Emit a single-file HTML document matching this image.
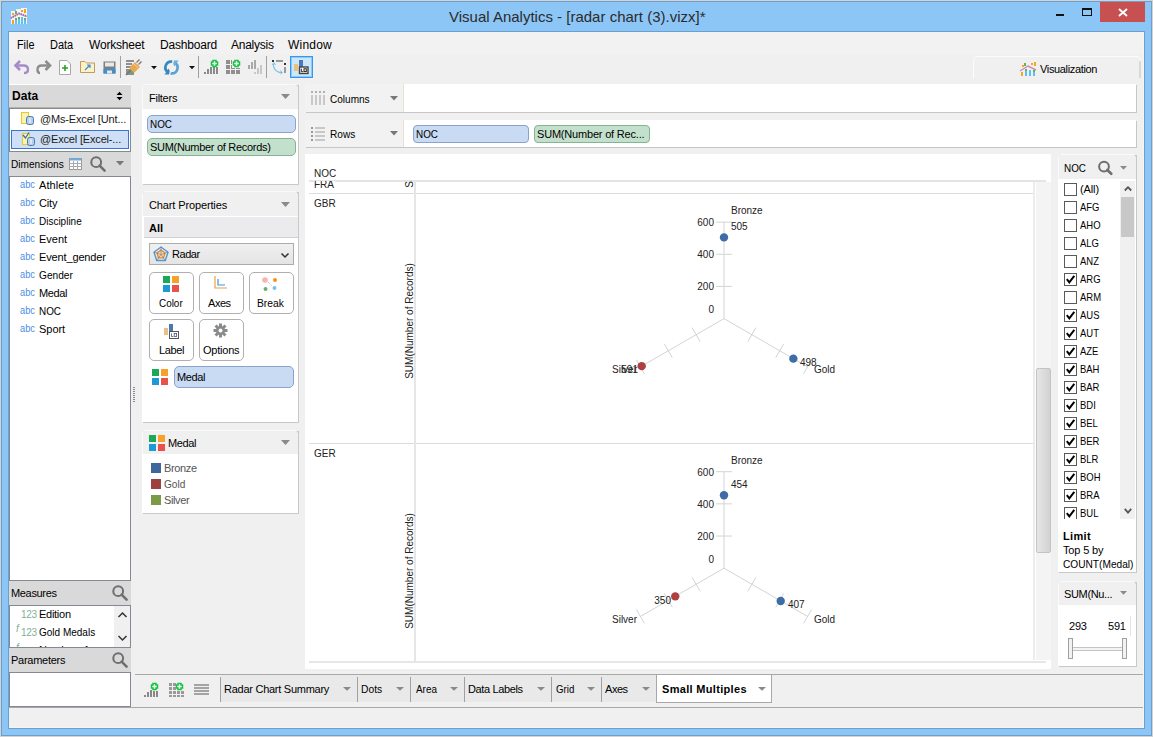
<!DOCTYPE html>
<html><head><meta charset="utf-8">
<style>
*{box-sizing:border-box;margin:0;padding:0}
body{width:1153px;height:737px;position:relative;overflow:hidden;background:#d5d2cf;font-family:"Liberation Sans",sans-serif;font-size:11px;color:#1a1a1a}
.a{position:absolute}
.t{position:absolute;white-space:nowrap;line-height:1;letter-spacing:-0.35px}
.m{position:absolute;white-space:nowrap;line-height:1;font-size:12px;letter-spacing:-0.4px}
.c{position:absolute;white-space:nowrap;line-height:1;font-size:11px;color:#222}
svg{position:absolute;overflow:visible}
</style></head><body>
<div class="a" style="left:1px;top:1px;width:1151px;height:735px;background:#6a9fd0"></div>
<div class="a" style="left:2px;top:2px;width:1149px;height:733px;background:#8cc6f7"></div>
<div class="a" style="left:8px;top:31px;width:1137px;height:698px;background:#6a9fd0"></div>
<div class="a" style="left:9px;top:32px;width:1135px;height:696px;background:#f8f4f0"></div>
<div class="a" style="left:9px;top:32px;width:1134px;height:695px;background:#f0f0f0"></div>
<div class="a" style="left:9px;top:32px;width:1134px;height:22px;background:#f2f2f2"></div>
<!-- title -->
<div class="t" style="left:449px;top:9px;font-size:15px;letter-spacing:0;color:#2b2b2b">Visual Analytics - [radar chart (3).vizx]*</div>
<div class="a" style="left:1100px;top:2px;width:45px;height:20px;background:#c75050"></div>
<svg style="left:1118px;top:8px" width="10" height="9"><path d="M1 1L9 8M9 1L1 8" stroke="#fff" stroke-width="1.9"></path></svg>
<div class="a" style="left:1082px;top:8px;width:10px;height:8px;border:1px solid #111;border-top-width:2px"></div>
<div class="a" style="left:1056px;top:14px;width:8px;height:2px;background:#111"></div>
<!-- app icon -->
<svg style="left:11px;top:8px" width="16" height="16">
<path d="M0 3H5V1H10V0H16V16H0Z" fill="#fdfaf2" opacity=".9"></path>
<rect x="1" y="5" width="2" height="2" fill="#f5a31a"></rect><rect x="4" y="3" width="2" height="3" fill="#6aaa5a"></rect>
<rect x="10" y="2" width="2" height="2" fill="#f5a31a"></rect><rect x="13" y="1" width="2" height="4" fill="#f5a31a"></rect>
<path d="M0 10L8 5.5L16 8.5" stroke="#f4a8a0" stroke-width="1.8" fill="none"></path><path d="M0 10L8 5.5L16 8.5" stroke="#8a6ad0" stroke-width="1.8" fill="none" stroke-dasharray="1.2 1"></path>
<rect x="1" y="12" width="2" height="4" fill="#f5a31a"></rect>
<rect x="4" y="12" width="2" height="4" fill="#5ec0f5"></rect><rect x="4" y="10" width="2" height="2" fill="#6aaa5a"></rect>
<rect x="7" y="11" width="2" height="5" fill="#5ec0f5"></rect><rect x="7" y="9" width="2" height="2" fill="#6aaa5a"></rect>
<rect x="10" y="9" width="2" height="7" fill="#5ec0f5"></rect>
<rect x="13" y="12" width="2" height="4" fill="#5ec0f5"></rect><rect x="13" y="10" width="2" height="2" fill="#6aaa5a"></rect>
</svg>

<div class="m" style="color: rgb(0, 0, 0); left: 17px; top: 39px; letter-spacing: 0px; transform: scaleX(0.9); transform-origin: 0px 0px;">File</div>
<div class="m" style="color: rgb(0, 0, 0); left: 50px; top: 39px; letter-spacing: 0px; transform: scaleX(0.915); transform-origin: 0px 0px;">Data</div>
<div class="m" style="color: rgb(0, 0, 0); left: 89px; top: 39px; letter-spacing: -0.2px;">Worksheet</div>
<div class="m" style="color: rgb(0, 0, 0); left: 160px; top: 39px; letter-spacing: -0.19px;">Dashboard</div>
<div class="m" style="color: rgb(0, 0, 0); left: 231px; top: 39px; letter-spacing: -0.25px;">Analysis</div>
<div class="m" style="color: rgb(0, 0, 0); left: 288px; top: 39px; letter-spacing: 0.2px;">Window</div>

<!-- undo -->
<svg style="left:14px;top:60px" width="16" height="14"><path d="M6 1L1.5 5.5L6 10" stroke="#a68bc9" stroke-width="2.6" fill="none" stroke-linejoin="miter"></path><path d="M2 5.5H9.5Q14 5.5 14 9.5Q14 13 10 13" stroke="#a68bc9" stroke-width="2.4" fill="none"></path></svg>
<!-- redo -->
<svg style="left:36px;top:60px" width="16" height="14"><path d="M9.5 1L14 5.5L9.5 10" stroke="#8d8d8d" stroke-width="2.6" fill="none"></path><path d="M14 5.5H6Q1.5 5.5 1.5 9.5Q1.5 13 4 13" stroke="#8d8d8d" stroke-width="2.4" fill="none"></path></svg>
<!-- new sheet -->
<svg style="left:59px;top:60px" width="12" height="15"><path d="M0.5 0.5H8L11.5 4V14.5H0.5Z" fill="#fff" stroke="#a8a8a8"></path><path d="M3 8H9M6 5V11" stroke="#2aa02a" stroke-width="1.6"></path></svg>
<!-- open -->
<svg style="left:80px;top:61px" width="15" height="12"><path d="M0.5 0.5H5L6.5 2H14.5V11.5H0.5Z" fill="#fcf2c8" stroke="#c09a60"></path><path d="M5 9L10 4M7 4H10V7" stroke="#3a8fd0" stroke-width="1.2" fill="none"></path></svg>
<!-- save -->
<svg style="left:103px;top:61px" width="13" height="13"><rect x="0.5" y="0.5" width="12" height="12" fill="#7f7f7f"></rect><rect x="2" y="1.5" width="9" height="4" fill="#e8e8e8"></rect><rect x="0.5" y="8" width="12" height="4.5" fill="#3d8fd0"></rect><rect x="4" y="9.5" width="5" height="3" fill="#e8e8e8"></rect></svg>
<div class="a" style="left:120px;top:56px;width:1px;height:22px;background:#a0a0a0"></div>
<!-- data source -->
<svg style="left:125px;top:60px" width="17" height="16"><g fill="#8f8f8f"><rect x="1" y="0" width="8" height="2"></rect><rect x="1" y="3" width="6" height="2"></rect><rect x="1" y="6" width="6" height="2"></rect><rect x="1" y="9" width="8" height="6"></rect></g><path d="M4.5 7.5L10 2L15 7L9.5 12.5Q6 12 4.5 7.5Z" fill="#eba850"></path><path d="M8 3L13 8" stroke="#f6d7a8" stroke-width=".8"></path><path d="M11.5 2.5L14.5 -0.5M13.5 4.5L16.5 1.5" stroke="#777" stroke-width="1.3"></path><path d="M1 15L6 10" stroke="#777" stroke-width="1.6"></path><rect x="6" y="11" width="1.6" height="1.6" fill="#22dd22"></rect></svg>
<svg style="left:151px;top:66px" width="6" height="4"><path d="M0 0H6L3 3.2Z" fill="#111"></path></svg>
<!-- refresh -->
<svg style="left:164px;top:60px" width="15" height="15"><path d="M8 1.6A5.8 5.8 0 0 0 4.2 12.3" stroke="#3a88c2" stroke-width="2.7" fill="none"></path><path d="M0.5 14.5H7.5L4.5 8.5Z" fill="#3a88c2"></path><path d="M7 13.4A5.8 5.8 0 0 0 10.8 2.7" stroke="#5aa2d4" stroke-width="2.7" fill="none"></path><path d="M14.5 0.5H7.5L10.5 6.5Z" fill="#6ab0dc"></path><path d="M5.5 15L9.5 0" stroke="#f0f0f0" stroke-width="1.3"></path></svg>
<svg style="left:189px;top:66px" width="6" height="4"><path d="M0 0H6L3 3.2Z" fill="#111"></path></svg>
<div class="a" style="left:198px;top:56px;width:1px;height:22px;background:#a0a0a0"></div>
<!-- bars + -->
<svg style="left:204px;top:60px" width="15" height="14"><g fill="#8a8a8a"><rect x="0" y="12" width="2" height="2"></rect><rect x="3" y="9" width="2" height="5"></rect><rect x="6" y="7" width="2" height="7"></rect><rect x="9" y="7" width="2" height="7"></rect><rect x="12" y="7" width="2" height="7"></rect></g><path d="M9 0.5H12V2H13.5V5H12V6.5H9V5H7.5V2H9Z" fill="#e8ffe8" stroke="#18c048" stroke-width="1.5"></path></svg>
<!-- grid + -->
<svg style="left:226px;top:60px" width="15" height="14"><g fill="#8f8f8f"><rect x="0" y="0" width="4" height="4"></rect><rect x="5" y="0" width="4" height="4"></rect><rect x="0" y="5" width="4" height="4"></rect><rect x="5" y="5" width="4" height="4"></rect><rect x="10" y="5" width="4" height="4"></rect><rect x="0" y="10" width="4" height="4"></rect><rect x="5" y="10" width="4" height="4"></rect><rect x="10" y="10" width="4" height="4"></rect></g><rect x="6" y="0" width="9" height="8" fill="#f0f0f0"></rect><path d="M9 0.5H12V2H13.5V5H12V6.5H9V5H7.5V2H9Z" fill="#e8ffe8" stroke="#18c048" stroke-width="1.5"></path></svg>
<!-- bars gray -->
<svg style="left:248px;top:60px" width="15" height="14"><g fill="#a8a8a8"><rect x="0" y="5" width="2" height="4"></rect><rect x="3" y="2" width="2" height="7"></rect><rect x="6" y="0" width="2" height="9"></rect></g><g fill="#c8c8c8"><rect x="6" y="12" width="2" height="2"></rect><rect x="9" y="8" width="2" height="6"></rect><rect x="12" y="5" width="2" height="9"></rect></g></svg>
<div class="a" style="left:266px;top:56px;width:1px;height:22px;background:#a0a0a0"></div>
<!-- dashed rect -->
<svg style="left:272px;top:60px" width="15" height="14"><rect x="0" y="0" width="2" height="2" fill="#333"></rect><rect x="4" y="0" width="7" height="2" fill="#999"></rect><rect x="12" y="3" width="2" height="2" fill="#333"></rect><rect x="12" y="7" width="2" height="6" fill="#999"></rect><path d="M1.5 4Q1 9 5.5 11.5Q8 13 10 12.5" stroke="#7cc0ea" stroke-width="1.1" fill="none"></path><path d="M0 5L1.8 2.5L3.5 5" stroke="#7cc0ea" fill="none"></path><path d="M8 10.5L10.5 12.5L8.5 14" stroke="#7cc0ea" fill="none"></path></svg>
<!-- selected button -->
<div class="a" style="left:290px;top:56px;width:23px;height:22px;background:#cce6fc;border:1px solid #3399f0;box-shadow:inset 0 0 0 1px #8ec8f8"></div>
<svg style="left:294px;top:60px" width="15" height="15"><rect x="0" y="4" width="4" height="7" fill="#e8c080"></rect><rect x="5" y="0" width="4" height="7" fill="#4a7ab8"></rect><rect x="5.5" y="7" width="8.5" height="6.5" fill="#fff" stroke="#444" stroke-width="1.4"></rect><path d="M7.3 8.7V11.7H9.2" stroke="#222" stroke-width="1" fill="none"></path><rect x="10" y="8.8" width="2.3" height="2.8" fill="none" stroke="#222" stroke-width="1"></rect></svg>
<!-- Visualization tab -->
<div class="a" style="left:973px;top:56px;width:168px;height:22px;background:#f0f0f0;border:1px solid #fcfcfc;border-bottom:none;border-radius:5px 5px 0 0"></div>
<div class="a" style="left:1139px;top:61px;width:2px;height:17px;background:#d8d8d8"></div>
<svg style="left:1020px;top:62px" width="17" height="14">
<rect x="2" y="3" width="2" height="2" fill="#f5a623"></rect><rect x="4" y="1" width="2" height="3" fill="#6ab04c"></rect>
<rect x="11" y="1" width="2" height="2" fill="#f5a623"></rect><rect x="14" y="0" width="2" height="4" fill="#f5a623"></rect>
<path d="M0 9L8 4L16 8" stroke="#c98ab8" stroke-width="1.4" fill="none"></path>
<rect x="1" y="10" width="2" height="4" fill="#f5a623"></rect><rect x="5" y="9" width="2" height="5" fill="#5bc0f8"></rect>
<rect x="9" y="8" width="2" height="6" fill="#5bc0f8"></rect><rect x="13" y="10" width="2" height="4" fill="#5bc0f8"></rect>
<rect x="5" y="7" width="2" height="2" fill="#6ab04c"></rect><rect x="13" y="8" width="2" height="2" fill="#6ab04c"></rect>
</svg>
<div class="t" style="left: 1040px; top: 64px; color: rgb(0, 0, 0); letter-spacing: -0.34px;">Visualization</div>

<!-- left panel -->
<div class="a" style="left:9px;top:85px;width:122px;height:622px;background:#d9d9d9"></div>
<div class="a" style="left:9px;top:85px;width:122px;height:22px;background:#d9d9d9"></div>
<div class="t" style="left: 12px; top: 90px; font-weight: bold; font-size: 12px; letter-spacing: 0.05px; color: rgb(0, 0, 0);">Data</div>
<div class="a" style="left:9px;top:84px;width:122px;height:1px;background:#fff"></div><svg style="left:116px;top:91px" width="7" height="10"><path d="M0.5 4L3.5 0.8L6.5 4Z M0.5 6L3.5 9.2L6.5 6Z" fill="#000"></path></svg>
<div class="a" style="left:9px;top:107px;width:122px;height:1px;background:#bab3a0"></div><div class="a" style="left:9px;top:108px;width:122px;height:44px;background:#fff;border:1px solid #848a94"></div>
<svg style="left:21px;top:112px" width="14" height="13"><rect x="0.5" y="0.5" width="7" height="11" fill="#f9f3b0" stroke="#e6c830"></rect><rect x="5.5" y="4.5" width="7" height="8" rx="2" fill="#b8cde8" stroke="#4a7ab8"></rect><path d="M9 6V11" stroke="#fff"></path></svg>
<div class="t" style="left: 40px; top: 114px; letter-spacing: -0.16px;">@Ms-Excel [Unt...</div>
<div class="a" style="left:11px;top:130px;width:118px;height:19px;background:#cfe0f6;border:1px solid #3a74d0"></div>
<svg style="left:22px;top:132px" width="14" height="14"><rect x="0.5" y="1.5" width="7" height="11" fill="#f9f3b0" stroke="#e6c830"></rect><path d="M1 3L3.5 6L7 0.5" stroke="#3a6ab8" stroke-width="1.3" fill="none"></path><rect x="5.5" y="5.5" width="7" height="8" rx="2" fill="#b8cde8" stroke="#4a7ab8"></rect><path d="M9 7V12" stroke="#fff"></path></svg>
<div class="t" style="left: 40px; top: 134px; letter-spacing: -0.17px;">@Excel [Excel-...</div>
<!-- dimensions -->
<div class="t" style="left: 11px; top: 159px; color: rgb(0, 0, 0); letter-spacing: 0px; transform: scaleX(0.918); transform-origin: 0px 0px;">Dimensions</div>
<svg style="left:69px;top:158px" width="13" height="12"><rect x="0.5" y="0.5" width="12" height="11" fill="#fff" stroke="#999"></rect><rect x="0.5" y="0.5" width="12" height="2" fill="#6aaee8"></rect><path d="M0 5.5H13M0 8.5H13M4.5 3V12M8.5 3V12" stroke="#aaa" stroke-width="1"></path></svg>
<svg style="left:90px;top:156px" width="17" height="16"><circle cx="6.2" cy="6.2" r="4.9" stroke="#6e6e6e" stroke-width="2" fill="none"></circle><path d="M9.6 9.6L14.6 14.6" stroke="#6e6e6e" stroke-width="2.6" stroke-linecap="round"></path></svg>
<svg style="left:116px;top:161px" width="8" height="5"><path d="M0 0H8L4 4.5Z" fill="#777"></path></svg>
<div class="a" style="left:9px;top:176px;width:122px;height:405px;background:#fff;border:1px solid #848a94"></div>

<div class="t" style="left: 20px; top: 179px; color: rgb(77, 141, 230); letter-spacing: 0px; transform: scaleX(0.839); transform-origin: 0px 0px;">abc</div><div class="t" style="left: 39px; top: 180px; color: rgb(0, 0, 0); letter-spacing: 0.1px;">Athlete</div>
<div class="t" style="left: 20px; top: 197px; color: rgb(77, 141, 230); letter-spacing: 0px; transform: scaleX(0.839); transform-origin: 0px 0px;">abc</div><div class="t" style="left: 39px; top: 198px; color: rgb(0, 0, 0); letter-spacing: -0.15px;">City</div>
<div class="t" style="left: 20px; top: 215px; color: rgb(77, 141, 230); letter-spacing: 0px; transform: scaleX(0.839); transform-origin: 0px 0px;">abc</div><div class="t" style="left: 39px; top: 216px; color: rgb(0, 0, 0); letter-spacing: 0px; transform: scaleX(0.907); transform-origin: 0px 0px;">Discipline</div>
<div class="t" style="left: 20px; top: 233px; color: rgb(77, 141, 230); letter-spacing: 0px; transform: scaleX(0.839); transform-origin: 0px 0px;">abc</div><div class="t" style="left: 39px; top: 234px; color: rgb(0, 0, 0); letter-spacing: -0.02px;">Event</div>
<div class="t" style="left: 20px; top: 251px; color: rgb(77, 141, 230); letter-spacing: 0px; transform: scaleX(0.839); transform-origin: 0px 0px;">abc</div><div class="t" style="left: 39px; top: 252px; color: rgb(0, 0, 0); letter-spacing: -0.14px;">Event_gender</div>
<div class="t" style="left: 20px; top: 269px; color: rgb(77, 141, 230); letter-spacing: 0px; transform: scaleX(0.839); transform-origin: 0px 0px;">abc</div><div class="t" style="left: 39px; top: 270px; color: rgb(0, 0, 0); letter-spacing: 0px; transform: scaleX(0.924); transform-origin: 0px 0px;">Gender</div>
<div class="t" style="left: 20px; top: 287px; color: rgb(77, 141, 230); letter-spacing: 0px; transform: scaleX(0.839); transform-origin: 0px 0px;">abc</div><div class="t" style="left: 39px; top: 288px; color: rgb(0, 0, 0); letter-spacing: -0.38px;">Medal</div>
<div class="t" style="left: 20px; top: 305px; color: rgb(77, 141, 230); letter-spacing: 0px; transform: scaleX(0.839); transform-origin: 0px 0px;">abc</div><div class="t" style="left: 39px; top: 306px; color: rgb(0, 0, 0); letter-spacing: 0px; transform: scaleX(0.898); transform-origin: 0px 0px;">NOC</div>
<div class="t" style="left: 20px; top: 323px; color: rgb(77, 141, 230); letter-spacing: 0px; transform: scaleX(0.839); transform-origin: 0px 0px;">abc</div><div class="t" style="left: 39px; top: 324px; color: rgb(0, 0, 0); letter-spacing: -0.03px;">Sport</div>
<!-- measures -->
<div class="t" style="left: 11px; top: 588px; color: rgb(0, 0, 0); letter-spacing: -0.34px;">Measures</div>
<svg style="left:112px;top:585px" width="17" height="16"><circle cx="6.2" cy="6.2" r="4.9" stroke="#6e6e6e" stroke-width="2" fill="none"></circle><path d="M9.6 9.6L14.6 14.6" stroke="#6e6e6e" stroke-width="2.6" stroke-linecap="round"></path></svg>
<div class="a" style="left:9px;top:605px;width:122px;height:43px;background:#fff;border:1px solid #848a94;overflow:hidden">
<div class="a" style="left:104px;top:0;width:16px;height:41px;background:#f0f0f0"></div>
<svg style="left:108px;top:6px" width="9" height="6"><path d="M0.5 5L4.5 1L8.5 5" stroke="#333" stroke-width="1.5" fill="none"></path></svg>
<svg style="left:108px;top:29px" width="9" height="6"><path d="M0.5 1L4.5 5L8.5 1" stroke="#333" stroke-width="1.5" fill="none"></path></svg>
<div class="t" style="left:11px;top:4px;color:#7fb09a;font-size:10px">123</div><div class="t" style="left: 29px; top: 3px; color: rgb(0, 0, 0); letter-spacing: -0.27px;">Edition</div>
<div class="t" style="left:6px;top:18px;color:#7fb09a;font-size:10px;font-style:italic">f</div>
<div class="t" style="left:11px;top:22px;color:#7fb09a;font-size:10px">123</div><div class="t" style="left: 29px; top: 21px; color: rgb(0, 0, 0); letter-spacing: 0px; transform: scaleX(0.909); transform-origin: 0px 0px;">Gold Medals</div>
<div class="t" style="left:6px;top:37px;color:#7fb09a;font-size:10px;font-style:italic">f</div>
<div class="t" style="left:29px;top:39px;color:#000">Number of</div>
</div>
<div class="t" style="left: 11px; top: 655px; color: rgb(0, 0, 0); letter-spacing: -0.26px;">Parameters</div>
<svg style="left:112px;top:652px" width="17" height="16"><circle cx="6.2" cy="6.2" r="4.9" stroke="#6e6e6e" stroke-width="2" fill="none"></circle><path d="M9.6 9.6L14.6 14.6" stroke="#6e6e6e" stroke-width="2.6" stroke-linecap="round"></path></svg>
<div class="a" style="left:9px;top:672px;width:122px;height:35px;background:#fff;border:1px solid #848a94"></div>

<!-- splitter handle -->
<svg style="left:133px;top:387px" width="2" height="16"><path d="M0 0.5H2M0 2.5H2M0 4.5H2M0 6.5H2M0 8.5H2M0 10.5H2M0 12.5H2M0 14.5H2" stroke="#8a8a8a"></path></svg>
<!-- Filters card -->
<div class="a" style="left:143px;top:85px;width:156px;height:100px;background:#c9c9c9;border-radius:4px 0 0 0"></div>
<div class="a" style="left:142px;top:84px;width:156px;height:100px;background:#fff;border-radius:5px 5px 0 0;overflow:hidden">
 <div class="a" style="left:0;top:0;width:156px;height:25px;background:#f0f0f0;border-top:1px solid #fafafa;border-left:1px solid #fafafa"></div>
</div>
<div class="t" style="left: 149px; top: 93px; color: rgb(0, 0, 0); letter-spacing: -0.26px;">Filters</div>
<svg style="left:281px;top:94px" width="9" height="6"><path d="M0 0H9L4.5 5Z" fill="#8a8a8a"></path></svg>
<div class="a" style="left:147px;top:115px;width:149px;height:18px;background:#c9daf3;border:1px solid #8aa3cc;border-radius:5px"></div>
<div class="t" style="left: 150px; top: 119px; color: rgb(0, 0, 0); letter-spacing: 0px; transform: scaleX(0.898); transform-origin: 0px 0px;">NOC</div>
<div class="a" style="left:147px;top:138px;width:149px;height:18px;background:#c3e0cc;border:1px solid #86b394;border-radius:5px"></div>
<div class="t" style="left: 150px; top: 142px; color: rgb(0, 0, 0); letter-spacing: -0.3px;">SUM(Number of Records)</div>
<!-- Chart properties card -->
<div class="a" style="left:143px;top:192px;width:156px;height:231px;background:#c9c9c9"></div>
<div class="a" style="left:142px;top:191px;width:156px;height:231px;background:#fff;border-radius:5px 5px 0 0;overflow:hidden">
 <div class="a" style="left:0;top:0;width:156px;height:25px;background:#f0f0f0;border-top:1px solid #fafafa;border-left:1px solid #fafafa"></div>
 <div class="a" style="left:2px;top:25px;width:154px;height:22px;background:#ebebed;border-top:1px solid #fff;border-bottom:1px solid #d0d0d0"></div>
</div>
<div class="t" style="left: 149px; top: 200px; color: rgb(0, 0, 0); letter-spacing: -0.13px;">Chart Properties</div>
<svg style="left:281px;top:202px" width="9" height="6"><path d="M0 0H9L4.5 5Z" fill="#8a8a8a"></path></svg>
<div class="t" style="left: 149px; top: 223px; font-weight: bold; color: rgb(0, 0, 0); letter-spacing: 0px;">All</div>
<div class="a" style="left:149px;top:243px;width:145px;height:22px;background:linear-gradient(#f0f0f0,#e4e4e4);border:1px solid #acacac"></div>
<svg style="left:153px;top:246px" width="16" height="16"><path d="M8 1L15 6.2L12.3 14.5H3.7L1 6.2Z" fill="none" stroke="#4a9ad8" stroke-width="1.4"></path><path d="M8 4L12 7L10.5 11.8H5.5L4 7Z" fill="#f8d8b0" stroke="#e8862a" stroke-width="1.3"></path><path d="M8 1V8.5M1 6.2L8 8.5L15 6.2M3.7 14.5L8 8.5L12.3 14.5" stroke="#777" stroke-width=".6" fill="none"></path></svg>
<div class="t" style="left: 172px; top: 249px; color: rgb(0, 0, 0); letter-spacing: -0.45px;">Radar</div>
<svg style="left:281px;top:253px" width="8" height="5"><path d="M0.5 0.5L4 4L7.5 0.5" stroke="#333" stroke-width="1.5" fill="none"></path></svg>
<!-- buttons -->
<div class="a" style="left:149px;top:272px;width:45px;height:42px;background:#fff;border:1px solid #b0b0b0;border-radius:5px"></div>
<div class="a" style="left:199px;top:272px;width:45px;height:42px;background:#fff;border:1px solid #b0b0b0;border-radius:5px"></div>
<div class="a" style="left:249px;top:272px;width:45px;height:42px;background:#fff;border:1px solid #b0b0b0;border-radius:5px"></div>
<div class="a" style="left:149px;top:319px;width:45px;height:42px;background:#fff;border:1px solid #b0b0b0;border-radius:5px"></div>
<div class="a" style="left:199px;top:319px;width:45px;height:42px;background:#fff;border:1px solid #b0b0b0;border-radius:5px"></div>
<svg style="left:163px;top:276px" width="16" height="16"><rect x="0" y="0" width="7" height="7" fill="#1aaa55"></rect><rect x="9" y="0" width="7" height="7" fill="#f7a12a"></rect><rect x="0" y="9" width="7" height="7" fill="#1b9ad6"></rect><rect x="9" y="9" width="7" height="7" fill="#e8524a"></rect></svg>
<div class="t" style="left: 159px; top: 298px; color: rgb(0, 0, 0); letter-spacing: 0px; transform: scaleX(0.901); transform-origin: 0px 0px;">Color</div>
<svg style="left:214px;top:276px" width="14" height="13"><path d="M1 0V12H13" stroke="#f0a040" stroke-width="1.2" fill="none"></path><path d="M4 3V9H11" stroke="#3d9ad8" stroke-width="1.2" fill="none"></path></svg>
<div class="t" style="left: 208px; top: 298px; color: rgb(0, 0, 0); letter-spacing: -0.45px;">Axes</div>
<svg style="left:262px;top:277px" width="16" height="15"><circle cx="3" cy="3" r="2.8" fill="#f5b5b0"></circle><circle cx="13" cy="3" r="2" fill="#f7901e"></circle><circle cx="3.5" cy="12" r="2" fill="#6ab06a"></circle><circle cx="12.5" cy="11" r="2" fill="#7cc0f0"></circle><path d="M6 5L10 9" stroke="#999" stroke-width=".8" stroke-dasharray="1 1"></path></svg>
<div class="t" style="left: 257px; top: 298px; color: rgb(0, 0, 0); letter-spacing: 0px; transform: scaleX(0.934); transform-origin: 0px 0px;">Break</div>
<svg style="left:164px;top:323px" width="15" height="16"><rect x="0" y="5" width="4" height="7" fill="#e8c08a"></rect><rect x="5" y="1" width="4" height="8" fill="#4a78b0"></rect><rect x="5.5" y="8.5" width="9" height="7" fill="#fff" stroke="#555" stroke-width="1"></rect><path d="M7.5 10.5V13.5H9.3" stroke="#3a5a8a" stroke-width=".8" fill="none"></path><rect x="10.2" y="10.5" width="2.4" height="3" fill="none" stroke="#3a5a8a" stroke-width=".8"></rect></svg>
<div class="t" style="left: 159px; top: 345px; color: rgb(0, 0, 0); letter-spacing: -0.37px;">Label</div>
<svg style="left:213px;top:323px" width="15" height="15"><g fill="#8a8a8a"><circle cx="7.5" cy="7.5" r="4.5"></circle><rect x="6" y="0.5" width="3" height="14"></rect><rect x="0.5" y="6" width="14" height="3"></rect><rect x="6" y="0.5" width="3" height="14" transform="rotate(45 7.5 7.5)"></rect><rect x="6" y="0.5" width="3" height="14" transform="rotate(-45 7.5 7.5)"></rect></g><circle cx="7.5" cy="7.5" r="2" fill="#fff"></circle></svg>
<div class="t" style="left: 203px; top: 345px; color: rgb(0, 0, 0); letter-spacing: -0.23px;">Options</div>
<svg style="left:152px;top:369px" width="16" height="16"><rect x="0" y="0" width="7" height="7" fill="#1aaa55"></rect><rect x="9" y="0" width="7" height="7" fill="#f7a12a"></rect><rect x="0" y="9" width="7" height="7" fill="#1b9ad6"></rect><rect x="9" y="9" width="7" height="7" fill="#e8524a"></rect></svg>
<div class="a" style="left:174px;top:366px;width:120px;height:22px;background:#c9daf3;border:1px solid #8aa3cc;border-radius:5px"></div>
<div class="t" style="left: 177px; top: 372px; color: rgb(0, 0, 0); letter-spacing: -0.38px;">Medal</div>
<!-- Medal legend card -->
<div class="a" style="left:143px;top:431px;width:156px;height:83px;background:#c9c9c9"></div>
<div class="a" style="left:142px;top:430px;width:156px;height:83px;background:#fff;border-radius:5px 5px 0 0;overflow:hidden">
 <div class="a" style="left:0;top:0;width:156px;height:24px;background:#f0f0f0;border-top:1px solid #fafafa;border-left:1px solid #fafafa"></div>
</div>
<svg style="left:149px;top:435px" width="16" height="16"><rect x="0" y="0" width="7" height="7" fill="#1aaa55"></rect><rect x="9" y="0" width="7" height="7" fill="#f7a12a"></rect><rect x="0" y="9" width="7" height="7" fill="#1b9ad6"></rect><rect x="9" y="9" width="7" height="7" fill="#e8524a"></rect></svg>
<div class="t" style="left: 168px; top: 438px; color: rgb(0, 0, 0); letter-spacing: -0.38px;">Medal</div>
<svg style="left:281px;top:440px" width="9" height="6"><path d="M0 0H9L4.5 5Z" fill="#8a8a8a"></path></svg>
<div class="a" style="left:151px;top:463px;width:10px;height:10px;background:#3f679c"></div>
<div class="t" style="left: 164px; top: 463px; color: rgb(85, 85, 85); letter-spacing: -0.35px;">Bronze</div>
<div class="a" style="left:151px;top:479px;width:10px;height:10px;background:#9c4040"></div>
<div class="t" style="left: 164px; top: 479px; color: rgb(85, 85, 85); letter-spacing: 0px; transform: scaleX(0.917); transform-origin: 0px 0px;">Gold</div>
<div class="a" style="left:151px;top:495px;width:10px;height:10px;background:#7a9a48"></div>
<div class="t" style="left: 164px; top: 495px; color: rgb(85, 85, 85); letter-spacing: -0.39px;">Silver</div>

<!-- Columns shelf -->
<div class="a" style="left:306px;top:85px;width:831px;height:28px;background:#c6c6c6;border-radius:4px 0 0 0"></div>
<div class="a" style="left:305px;top:84px;width:831px;height:28px;background:#fff;border-radius:5px 0 0 0;overflow:hidden">
 <div class="a" style="left:0;top:0;width:99px;height:28px;background:#f2f2f2;border-right:1px solid #e8e2d4"></div>
</div>
<svg style="left:311px;top:91px" width="14" height="14"><g fill="#c8c8c8"><rect x="0" y="0" width="2" height="2" fill="#b0b0b0"></rect><rect x="4" y="0" width="2" height="2" fill="#b0b0b0"></rect><rect x="8" y="0" width="2" height="2" fill="#b0b0b0"></rect><rect x="12" y="0" width="2" height="2" fill="#b0b0b0"></rect><rect x="0" y="4" width="2" height="10"></rect><rect x="4" y="4" width="2" height="10"></rect><rect x="8" y="4" width="2" height="10"></rect><rect x="12" y="4" width="2" height="10"></rect></g></svg>
<div class="t" style="left: 330px; top: 94px; color: rgb(0, 0, 0); letter-spacing: 0px; transform: scaleX(0.913); transform-origin: 0px 0px;">Columns</div>
<svg style="left:390px;top:96px" width="8" height="5"><path d="M0 0H8L4 4.5Z" fill="#777"></path></svg>
<!-- Rows shelf -->
<div class="a" style="left:306px;top:121px;width:831px;height:27px;background:#c6c6c6;border-radius:4px 0 0 0"></div>
<div class="a" style="left:305px;top:120px;width:831px;height:27px;background:#fff;border-radius:5px 0 0 0;overflow:hidden">
 <div class="a" style="left:0;top:0;width:99px;height:27px;background:#f2f2f2;border-right:1px solid #e8e2d4"></div>
</div>
<svg style="left:311px;top:127px" width="14" height="14"><g fill="#c8c8c8"><rect x="0" y="0" width="2" height="2" fill="#999"></rect><rect x="0" y="4" width="2" height="2" fill="#999"></rect><rect x="0" y="8" width="2" height="2" fill="#999"></rect><rect x="0" y="12" width="2" height="2" fill="#999"></rect><rect x="4" y="0" width="10" height="2"></rect><rect x="4" y="4" width="10" height="2"></rect><rect x="4" y="8" width="10" height="2"></rect><rect x="4" y="12" width="10" height="2"></rect></g></svg>
<div class="t" style="left: 330px; top: 129px; color: rgb(0, 0, 0); letter-spacing: 0px; transform: scaleX(0.918); transform-origin: 0px 0px;">Rows</div>
<svg style="left:390px;top:131px" width="8" height="5"><path d="M0 0H8L4 4.5Z" fill="#777"></path></svg>
<div class="a" style="left:413px;top:125px;width:116px;height:18px;background:#c9daf3;border:1px solid #8aa3cc;border-radius:4px"></div>
<div class="t" style="left: 416px; top: 129px; color: rgb(0, 0, 0); letter-spacing: 0px; transform: scaleX(0.898); transform-origin: 0px 0px;">NOC</div>
<div class="a" style="left:534px;top:125px;width:116px;height:18px;background:#c3e0cc;border:1px solid #86b394;border-radius:4px"></div>
<div class="t" style="left: 537px; top: 129px; color: rgb(0, 0, 0); letter-spacing: -0.19px;">SUM(Number of Rec...</div>

<!-- chart area -->
<div class="a" style="left:305px;top:154px;width:746px;height:515px;background:#fff"></div>
<div class="a" style="left:1036px;top:182px;width:15px;height:478px;background:#f4f4f4"></div>
<div class="a" style="left:1036px;top:368px;width:15px;height:185px;background:linear-gradient(90deg,#e6e6e6,#d2d2d2);border:1px solid #c4c4c4;border-radius:2px"></div>
<div class="a" style="left:1033px;top:182px;width:2px;height:478px;background:#ececec"></div>
<svg style="left:0;top:0" width="1153" height="737">
<line x1="309" y1="181" x2="1046" y2="181" stroke="#e4e4e4" stroke-width="2"></line>
<line x1="309" y1="193.5" x2="1033" y2="193.5" stroke="#dcdcdc" stroke-width="1"></line>
<line x1="309" y1="443.5" x2="1033" y2="443.5" stroke="#dcdcdc" stroke-width="1"></line>
<line x1="309" y1="662" x2="1046" y2="662" stroke="#e6e6e6" stroke-width="2"></line>
<line x1="415" y1="181" x2="415" y2="662" stroke="#e6e6e6" stroke-width="2"></line>
</svg>
<div class="c" style="left:314px;top:169px;font-size:10px;">NOC</div>
<div class="c" style="left:314px;top:199px;font-size:10px;">GBR</div>
<div class="c" style="left:314px;top:449px;font-size:10px;">GER</div>
<div class="a" style="left:305px;top:181px;width:90px;height:12px;overflow:hidden"><div class="c" style="left:9px;top:-1px;font-size:10px;background:#fff;padding-right:1px">FRA</div></div>
<div class="a" style="left:395px;top:181px;width:19px;height:12px;overflow:hidden"><div class="c" style="left:-45px;top:-57px;width:120px;height:12px;line-height:12px;text-align:center;font-size:10px;transform:rotate(-90deg)">SUM(Number of Records)</div></div>

<svg style="left:0;top:0" width="1153" height="737">
<line x1="724" y1="318.6" x2="724" y2="222.10000000000002" stroke="#d4d4d4"></line>
<line x1="716" y1="286.43333333333334" x2="732" y2="286.43333333333334" stroke="#d4d4d4"></line>
<line x1="716" y1="254.2666666666667" x2="732" y2="254.2666666666667" stroke="#d4d4d4"></line>
<line x1="716" y1="222.10000000000002" x2="732" y2="222.10000000000002" stroke="#d4d4d4"></line>
<line x1="724" y1="318.6" x2="807.57" y2="366.85" stroke="#d4d4d4"></line>
<line x1="755.86" y1="327.76" x2="747.86" y2="341.61" stroke="#d4d4d4"></line>
<line x1="783.71" y1="343.84" x2="775.71" y2="357.69" stroke="#d4d4d4"></line>
<line x1="811.57" y1="359.92" x2="803.57" y2="373.78" stroke="#d4d4d4"></line>
<line x1="724" y1="318.6" x2="640.43" y2="366.85" stroke="#d4d4d4"></line>
<line x1="700.14" y1="341.61" x2="692.14" y2="327.76" stroke="#d4d4d4"></line>
<line x1="672.29" y1="357.69" x2="664.29" y2="343.84" stroke="#d4d4d4"></line>
<line x1="644.43" y1="373.78" x2="636.43" y2="359.92" stroke="#d4d4d4"></line>
<circle cx="724" cy="237.38" r="4.2" fill="#3e6ca7"></circle>
<circle cx="793.36" cy="358.65" r="4.2" fill="#3e6ca7"></circle>
<circle cx="641.68" cy="366.13" r="4.2" fill="#b04040"></circle>
<line x1="724" y1="568.2" x2="724" y2="471.70000000000005" stroke="#d4d4d4"></line>
<line x1="716" y1="536.0333333333334" x2="732" y2="536.0333333333334" stroke="#d4d4d4"></line>
<line x1="716" y1="503.86666666666673" x2="732" y2="503.86666666666673" stroke="#d4d4d4"></line>
<line x1="716" y1="471.70000000000005" x2="732" y2="471.70000000000005" stroke="#d4d4d4"></line>
<line x1="724" y1="568.2" x2="807.57" y2="616.45" stroke="#d4d4d4"></line>
<line x1="755.86" y1="577.36" x2="747.86" y2="591.21" stroke="#d4d4d4"></line>
<line x1="783.71" y1="593.44" x2="775.71" y2="607.29" stroke="#d4d4d4"></line>
<line x1="811.57" y1="609.52" x2="803.57" y2="623.38" stroke="#d4d4d4"></line>
<line x1="724" y1="568.2" x2="640.43" y2="616.45" stroke="#d4d4d4"></line>
<line x1="700.14" y1="591.21" x2="692.14" y2="577.36" stroke="#d4d4d4"></line>
<line x1="672.29" y1="607.29" x2="664.29" y2="593.44" stroke="#d4d4d4"></line>
<line x1="644.43" y1="623.38" x2="636.43" y2="609.52" stroke="#d4d4d4"></line>
<circle cx="724" cy="495.18" r="4.2" fill="#3e6ca7"></circle>
<circle cx="780.69" cy="600.93" r="4.2" fill="#3e6ca7"></circle>
<circle cx="675.25" cy="596.35" r="4.2" fill="#b04040"></circle>
</svg>
<div class="c" style="left:731px;top:206px;font-size:10px">Bronze</div>
<div class="c" style="left:654px;width:60px;text-align:right;top:218.0px;font-size:10px">600</div>
<div class="c" style="left:654px;width:60px;text-align:right;top:250.16666666666669px;font-size:10px">400</div>
<div class="c" style="left:654px;width:60px;text-align:right;top:282.3333333333333px;font-size:10px">200</div>
<div class="c" style="left:654px;width:60px;text-align:right;top:305px;font-size:10px">0</div>
<div class="c" style="left:814px;top:365px;font-size:10px">Gold</div>
<div class="c" style="left:577px;width:60px;text-align:right;top:365px;font-size:10px">Silver</div>
<div class="c" style="left:731px;top:222.27916666666667px;font-size:10px">505</div>
<div class="c" style="left:800px;top:358px;font-size:10px">498</div>
<div class="c" style="left:578px;width:60px;text-align:right;top:365px;font-size:10px">591</div>
<div class="c" style="left:731px;top:456px;font-size:10px">Bronze</div>
<div class="c" style="left:654px;width:60px;text-align:right;top:468.0px;font-size:10px">600</div>
<div class="c" style="left:654px;width:60px;text-align:right;top:500.1666666666667px;font-size:10px">400</div>
<div class="c" style="left:654px;width:60px;text-align:right;top:532.3333333333334px;font-size:10px">200</div>
<div class="c" style="left:654px;width:60px;text-align:right;top:555px;font-size:10px">0</div>
<div class="c" style="left:814px;top:615px;font-size:10px">Gold</div>
<div class="c" style="left:577px;width:60px;text-align:right;top:615px;font-size:10px">Silver</div>
<div class="c" style="left:731px;top:480.4816666666667px;font-size:10px">454</div>
<div class="c" style="left:788px;top:600px;font-size:10px">407</div>
<div class="c" style="left:611px;width:60px;text-align:right;top:596px;font-size:10px">350</div>
<div class="c" style="left:350px;top:314.5px;width:120px;height:12px;line-height:12px;text-align:center;font-size:10px;transform:rotate(-90deg)">SUM(Number of Records)</div>
<div class="c" style="left:350px;top:564.5px;width:120px;height:12px;line-height:12px;text-align:center;font-size:10px;transform:rotate(-90deg)">SUM(Number of Records)</div>

<!-- NOC filter card -->
<div class="a" style="left:1059px;top:155px;width:78px;height:418px;background:#c8c8c8"></div>
<div class="a" style="left:1058px;top:154px;width:78px;height:418px;background:#fff;border-radius:5px 5px 0 0;overflow:hidden">
 <div class="a" style="left:0;top:0;width:78px;height:25px;background:#f0f0f0;border-top:1px solid #fafafa;border-left:1px solid #fafafa"></div>
</div>
<div class="t" style="left: 1064px; top: 163px; color: rgb(0, 0, 0); letter-spacing: 0px; transform: scaleX(0.898); transform-origin: 0px 0px;">NOC</div>
<svg style="left:1097px;top:160px" width="17" height="16"><circle cx="7" cy="6.6" r="4.9" stroke="#6e6e6e" stroke-width="2" fill="none"></circle><path d="M10.3 10L14.3 13.8" stroke="#6e6e6e" stroke-width="2.6" stroke-linecap="round"></path></svg>
<svg style="left:1120px;top:166px" width="7" height="4"><path d="M0 0H7L3.5 3.8Z" fill="#8a8a8a"></path></svg>
<div class="a" style="left:1120px;top:181px;width:15px;height:338px;background:#f0f0f0"></div>
<div class="a" style="left:1121px;top:197px;width:13px;height:40px;background:#c8c8c8"></div>
<svg style="left:1124px;top:186px" width="8" height="5"><path d="M0.8 4.5L4 1.2L7.2 4.5" stroke="#555" stroke-width="1.8" fill="none"></path></svg>
<svg style="left:1124px;top:508px" width="8" height="6"><path d="M0.8 0.8L4 4.5L7.2 0.8" stroke="#555" stroke-width="1.8" fill="none"></path></svg>
<div class="a" style="left:1064px;top:183px;width:13px;height:13px;background:#fff;border:1px solid #5a5a5a"></div>
<div class="t" style="left: 1080px; top: 184px; color: rgb(0, 0, 0); letter-spacing: -0.12px;">(All)</div>
<div class="a" style="left:1064px;top:201px;width:13px;height:13px;background:#fff;border:1px solid #5a5a5a"></div>
<div class="t" style="left:1080px;top:202px;color:#000;letter-spacing:0;transform:scaleX(.86);transform-origin:0 0">AFG</div>
<div class="a" style="left:1064px;top:219px;width:13px;height:13px;background:#fff;border:1px solid #5a5a5a"></div>
<div class="t" style="left:1080px;top:220px;color:#000;letter-spacing:0;transform:scaleX(.86);transform-origin:0 0">AHO</div>
<div class="a" style="left:1064px;top:237px;width:13px;height:13px;background:#fff;border:1px solid #5a5a5a"></div>
<div class="t" style="left:1080px;top:238px;color:#000;letter-spacing:0;transform:scaleX(.86);transform-origin:0 0">ALG</div>
<div class="a" style="left:1064px;top:255px;width:13px;height:13px;background:#fff;border:1px solid #5a5a5a"></div>
<div class="t" style="left:1080px;top:256px;color:#000;letter-spacing:0;transform:scaleX(.86);transform-origin:0 0">ANZ</div>
<div class="a" style="left:1064px;top:273px;width:13px;height:13px;background:#fff;border:1px solid #5a5a5a"></div>
<svg style="left:1065px;top:274px" width="11" height="11"><path d="M1.8 5.2L4.3 8.3L9.3 1.8" stroke="#000" stroke-width="2" fill="none"></path></svg>
<div class="t" style="left:1080px;top:274px;color:#000;letter-spacing:0;transform:scaleX(.86);transform-origin:0 0">ARG</div>
<div class="a" style="left:1064px;top:291px;width:13px;height:13px;background:#fff;border:1px solid #5a5a5a"></div>
<div class="t" style="left:1080px;top:292px;color:#000;letter-spacing:0;transform:scaleX(.86);transform-origin:0 0">ARM</div>
<div class="a" style="left:1064px;top:309px;width:13px;height:13px;background:#fff;border:1px solid #5a5a5a"></div>
<svg style="left:1065px;top:310px" width="11" height="11"><path d="M1.8 5.2L4.3 8.3L9.3 1.8" stroke="#000" stroke-width="2" fill="none"></path></svg>
<div class="t" style="left:1080px;top:310px;color:#000;letter-spacing:0;transform:scaleX(.86);transform-origin:0 0">AUS</div>
<div class="a" style="left:1064px;top:327px;width:13px;height:13px;background:#fff;border:1px solid #5a5a5a"></div>
<svg style="left:1065px;top:328px" width="11" height="11"><path d="M1.8 5.2L4.3 8.3L9.3 1.8" stroke="#000" stroke-width="2" fill="none"></path></svg>
<div class="t" style="left:1080px;top:328px;color:#000;letter-spacing:0;transform:scaleX(.86);transform-origin:0 0">AUT</div>
<div class="a" style="left:1064px;top:345px;width:13px;height:13px;background:#fff;border:1px solid #5a5a5a"></div>
<svg style="left:1065px;top:346px" width="11" height="11"><path d="M1.8 5.2L4.3 8.3L9.3 1.8" stroke="#000" stroke-width="2" fill="none"></path></svg>
<div class="t" style="left:1080px;top:346px;color:#000;letter-spacing:0;transform:scaleX(.86);transform-origin:0 0">AZE</div>
<div class="a" style="left:1064px;top:363px;width:13px;height:13px;background:#fff;border:1px solid #5a5a5a"></div>
<svg style="left:1065px;top:364px" width="11" height="11"><path d="M1.8 5.2L4.3 8.3L9.3 1.8" stroke="#000" stroke-width="2" fill="none"></path></svg>
<div class="t" style="left:1080px;top:364px;color:#000;letter-spacing:0;transform:scaleX(.86);transform-origin:0 0">BAH</div>
<div class="a" style="left:1064px;top:381px;width:13px;height:13px;background:#fff;border:1px solid #5a5a5a"></div>
<svg style="left:1065px;top:382px" width="11" height="11"><path d="M1.8 5.2L4.3 8.3L9.3 1.8" stroke="#000" stroke-width="2" fill="none"></path></svg>
<div class="t" style="left:1080px;top:382px;color:#000;letter-spacing:0;transform:scaleX(.86);transform-origin:0 0">BAR</div>
<div class="a" style="left:1064px;top:399px;width:13px;height:13px;background:#fff;border:1px solid #5a5a5a"></div>
<svg style="left:1065px;top:400px" width="11" height="11"><path d="M1.8 5.2L4.3 8.3L9.3 1.8" stroke="#000" stroke-width="2" fill="none"></path></svg>
<div class="t" style="left:1080px;top:400px;color:#000;letter-spacing:0;transform:scaleX(.86);transform-origin:0 0">BDI</div>
<div class="a" style="left:1064px;top:417px;width:13px;height:13px;background:#fff;border:1px solid #5a5a5a"></div>
<svg style="left:1065px;top:418px" width="11" height="11"><path d="M1.8 5.2L4.3 8.3L9.3 1.8" stroke="#000" stroke-width="2" fill="none"></path></svg>
<div class="t" style="left:1080px;top:418px;color:#000;letter-spacing:0;transform:scaleX(.86);transform-origin:0 0">BEL</div>
<div class="a" style="left:1064px;top:435px;width:13px;height:13px;background:#fff;border:1px solid #5a5a5a"></div>
<svg style="left:1065px;top:436px" width="11" height="11"><path d="M1.8 5.2L4.3 8.3L9.3 1.8" stroke="#000" stroke-width="2" fill="none"></path></svg>
<div class="t" style="left:1080px;top:436px;color:#000;letter-spacing:0;transform:scaleX(.86);transform-origin:0 0">BER</div>
<div class="a" style="left:1064px;top:453px;width:13px;height:13px;background:#fff;border:1px solid #5a5a5a"></div>
<svg style="left:1065px;top:454px" width="11" height="11"><path d="M1.8 5.2L4.3 8.3L9.3 1.8" stroke="#000" stroke-width="2" fill="none"></path></svg>
<div class="t" style="left:1080px;top:454px;color:#000;letter-spacing:0;transform:scaleX(.86);transform-origin:0 0">BLR</div>
<div class="a" style="left:1064px;top:471px;width:13px;height:13px;background:#fff;border:1px solid #5a5a5a"></div>
<svg style="left:1065px;top:472px" width="11" height="11"><path d="M1.8 5.2L4.3 8.3L9.3 1.8" stroke="#000" stroke-width="2" fill="none"></path></svg>
<div class="t" style="left:1080px;top:472px;color:#000;letter-spacing:0;transform:scaleX(.86);transform-origin:0 0">BOH</div>
<div class="a" style="left:1064px;top:489px;width:13px;height:13px;background:#fff;border:1px solid #5a5a5a"></div>
<svg style="left:1065px;top:490px" width="11" height="11"><path d="M1.8 5.2L4.3 8.3L9.3 1.8" stroke="#000" stroke-width="2" fill="none"></path></svg>
<div class="t" style="left:1080px;top:490px;color:#000;letter-spacing:0;transform:scaleX(.86);transform-origin:0 0">BRA</div>
<div class="a" style="left:1064px;top:507px;width:13px;height:13px;background:#fff;border:1px solid #5a5a5a"></div>
<svg style="left:1065px;top:508px" width="11" height="11"><path d="M1.8 5.2L4.3 8.3L9.3 1.8" stroke="#000" stroke-width="2" fill="none"></path></svg>
<div class="t" style="left:1080px;top:508px;color:#000;letter-spacing:0;transform:scaleX(.86);transform-origin:0 0">BUL</div>
<div class="a" style="left:1060px;top:519px;width:60px;height:3px;background:#fff"></div>
<div class="t" style="left: 1063px; top: 531px; font-weight: bold; color: rgb(0, 0, 0); letter-spacing: 0.32px;">Limit</div>
<div class="t" style="left: 1063px; top: 545px; color: rgb(0, 0, 0); letter-spacing: -0.15px;">Top 5 by</div>
<div class="t" style="left: 1063px; top: 559px; color: rgb(0, 0, 0); letter-spacing: 0px; transform: scaleX(0.922); transform-origin: 0px 0px;">COUNT(Medal)</div>
<!-- SUM card -->
<div class="a" style="left:1059px;top:582px;width:78px;height:85px;background:#c8c8c8"></div>
<div class="a" style="left:1058px;top:581px;width:78px;height:85px;background:#fff;border-radius:5px 5px 0 0;overflow:hidden">
 <div class="a" style="left:0;top:0;width:78px;height:24px;background:#f0f0f0;border-top:1px solid #fafafa;border-left:1px solid #fafafa"></div>
</div>
<div class="t" style="left: 1064px; top: 589px; color: rgb(0, 0, 0); letter-spacing: -0.35px;">SUM(Nu...</div>
<svg style="left:1120px;top:591px" width="7" height="4"><path d="M0 0H7L3.5 3.8Z" fill="#8a8a8a"></path></svg>
<div class="t" style="left: 1069px; top: 621px; color: rgb(0, 0, 0); letter-spacing: -0.22px;">293</div>
<div class="t" style="left: 1108px; top: 621px; color: rgb(0, 0, 0); letter-spacing: -0.22px;">591</div>
<div class="a" style="left:1130px;top:616px;width:1px;height:20px;background:#e4e4e4"></div>
<div class="a" style="left:1072px;top:647px;width:51px;height:4px;background:#f4f4f4;border-top:1px solid #c4c4c4;border-bottom:1px solid #c4c4c4"></div>
<div class="a" style="left:1068px;top:638px;width:5px;height:21px;background:#f2f2f2;border:1px solid #a0a0a0"></div>
<div class="a" style="left:1122px;top:638px;width:5px;height:21px;background:#f2f2f2;border:1px solid #a0a0a0"></div>

<!-- tab bar -->
<div class="a" style="left:135px;top:674px;width:1008px;height:1px;background:#a8a8a8"></div>
<div class="a" style="left:221px;top:675px;width:435px;height:27px;background:#e9e9e9"></div>
<div class="a" style="left:9px;top:707px;width:1134px;height:1px;background:#a8a8a8"></div>
<svg style="left:144px;top:683px" width="15" height="14"><rect x="0" y="12" width="2" height="2" fill="#888"></rect><rect x="3" y="9" width="2" height="5" fill="#888"></rect><rect x="6" y="7" width="2" height="7" fill="#888"></rect><rect x="9" y="8" width="2" height="6" fill="#888"></rect><rect x="12" y="8" width="2" height="6" fill="#888"></rect><path d="M9 0.5H12V2H13.5V5H12V6.5H9V5H7.5V2H9Z" fill="#e8ffe8" stroke="#18c048" stroke-width="1.5"></path></svg>
<svg style="left:169px;top:683px" width="15" height="14"><g fill="#999"><rect x="0" y="0" width="3" height="3"></rect><rect x="4" y="0" width="3" height="3"></rect><rect x="0" y="4" width="3" height="3"></rect><rect x="4" y="4" width="3" height="3"></rect><rect x="0" y="8" width="3" height="3"></rect><rect x="4" y="8" width="3" height="3"></rect><rect x="8" y="8" width="3" height="3"></rect><rect x="12" y="8" width="3" height="3"></rect><rect x="0" y="12" width="3" height="2"></rect><rect x="4" y="12" width="3" height="2"></rect><rect x="8" y="12" width="3" height="2"></rect><rect x="12" y="12" width="3" height="2"></rect></g><path d="M9 0.5H12V2H13.5V5H12V6.5H9V5H7.5V2H9Z" fill="#e8ffe8" stroke="#18c048" stroke-width="1.5"></path></svg>
<svg style="left:194px;top:684px" width="15" height="11"><path d="M0 1H15M0 4H15M0 7H15M0 10H15" stroke="#8a8a8a" stroke-width="1.6"></path></svg>
<div class="a" style="left:220px;top:677px;width:1px;height:25px;background:#a0a0a0"></div>
<div class="t" style="left: 224px; top: 684px; color: rgb(0, 0, 0); letter-spacing: -0.26px;">Radar Chart Summary</div>
<svg style="left:343px;top:687px" width="8" height="4"><path d="M0 0H8L4 3.8Z" fill="#8a8a8a"></path></svg>
<div class="a" style="left:357px;top:677px;width:1px;height:25px;background:#a0a0a0"></div>
<div class="t" style="left: 361px; top: 684px; color: rgb(0, 0, 0); letter-spacing: 0px; transform: scaleX(0.934); transform-origin: 0px 0px;">Dots</div>
<svg style="left:396px;top:687px" width="8" height="4"><path d="M0 0H8L4 3.8Z" fill="#8a8a8a"></path></svg>
<div class="a" style="left:410px;top:677px;width:1px;height:25px;background:#a0a0a0"></div>
<div class="t" style="left: 416px; top: 684px; color: rgb(0, 0, 0); letter-spacing: 0px; transform: scaleX(0.9); transform-origin: 0px 0px;">Area</div>
<svg style="left:450px;top:687px" width="8" height="4"><path d="M0 0H8L4 3.8Z" fill="#8a8a8a"></path></svg>
<div class="a" style="left:464px;top:677px;width:1px;height:25px;background:#a0a0a0"></div>
<div class="t" style="left: 468px; top: 684px; color: rgb(0, 0, 0); letter-spacing: -0.37px;">Data Labels</div>
<svg style="left:537px;top:687px" width="8" height="4"><path d="M0 0H8L4 3.8Z" fill="#8a8a8a"></path></svg>
<div class="a" style="left:551px;top:677px;width:1px;height:25px;background:#a0a0a0"></div>
<div class="t" style="left: 556px; top: 684px; color: rgb(0, 0, 0); letter-spacing: 0px; transform: scaleX(0.881); transform-origin: 0px 0px;">Grid</div>
<svg style="left:587px;top:687px" width="8" height="4"><path d="M0 0H8L4 3.8Z" fill="#8a8a8a"></path></svg>
<div class="a" style="left:601px;top:677px;width:1px;height:25px;background:#a0a0a0"></div>
<div class="t" style="left: 605px; top: 684px; color: rgb(0, 0, 0); letter-spacing: -0.45px;">Axes</div>
<svg style="left:642px;top:687px" width="8" height="4"><path d="M0 0H8L4 3.8Z" fill="#8a8a8a"></path></svg>
<div class="a" style="left:656px;top:674px;width:116px;height:29px;background:#fff;border:1px solid #a8a8a8"></div>
<div class="t" style="left: 662px; top: 684px; color: rgb(0, 0, 0); font-weight: bold; letter-spacing: 0.32px;">Small Multiples</div>
<svg style="left:758px;top:687px" width="8" height="4"><path d="M0 0H8L4 3.8Z" fill="#8a8a8a"></path></svg>

</body></html>
